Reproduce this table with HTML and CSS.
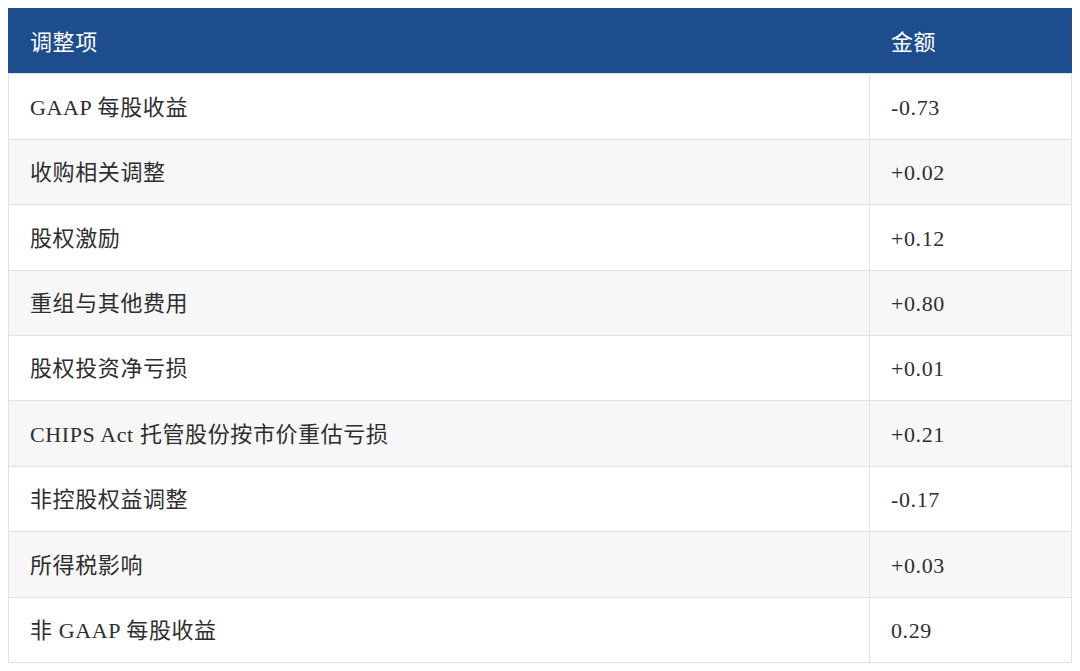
FILE: index.html
```html
<!DOCTYPE html>
<html lang="zh-CN">
<head>
<meta charset="utf-8">
<link rel="stylesheet" href="styles.css">
</head>
<body>
<table class="adj">
  <thead>
    <tr><th class="c1">调整项</th><th class="c2">金额</th></tr>
  </thead>
  <tbody>
    <tr><td>GAAP 每股收益</td><td>-0.73</td></tr>
    <tr><td>收购相关调整</td><td>+0.02</td></tr>
    <tr><td>股权激励</td><td>+0.12</td></tr>
    <tr><td>重组与其他费用</td><td>+0.80</td></tr>
    <tr><td>股权投资净亏损</td><td>+0.01</td></tr>
    <tr><td>CHIPS Act 托管股份按市价重估亏损</td><td>+0.21</td></tr>
    <tr><td>非控股权益调整</td><td>-0.17</td></tr>
    <tr><td>所得税影响</td><td>+0.03</td></tr>
    <tr><td>非 GAAP 每股收益</td><td>0.29</td></tr>
  </tbody>
</table>
</body>
</html>
```
FILE: styles.css
```css
html, body {
  margin: 0;
  padding: 0;
  background: #ffffff;
}
body {
  padding: 8px;
  font-family: "Liberation Serif", "Noto Sans CJK SC", serif;
  color: #2e2e2e;
}
.adj {
  width: 1064px;
  border-collapse: collapse;
  table-layout: fixed;
  font-size: 22px;
  letter-spacing: 0.6px;
}
.adj th, .adj td {
  height: 65.4px;
  box-sizing: border-box;
  padding: 3px 21px 0;
  text-align: left;
  vertical-align: middle;
  font-weight: normal;
  line-height: 1.2;
}
.adj th {
  background: #1d4d8c;
  color: #ffffff;
  border: 1px solid #1d4d8c;
  border-bottom-color: #d9e2ee;
}
.adj th.c1 { width: 861px; }
.adj td {
  border: 1px solid #e1e1e1;
}
.adj tbody tr:nth-child(even) td {
  background: #f7f7f7;
}
```
